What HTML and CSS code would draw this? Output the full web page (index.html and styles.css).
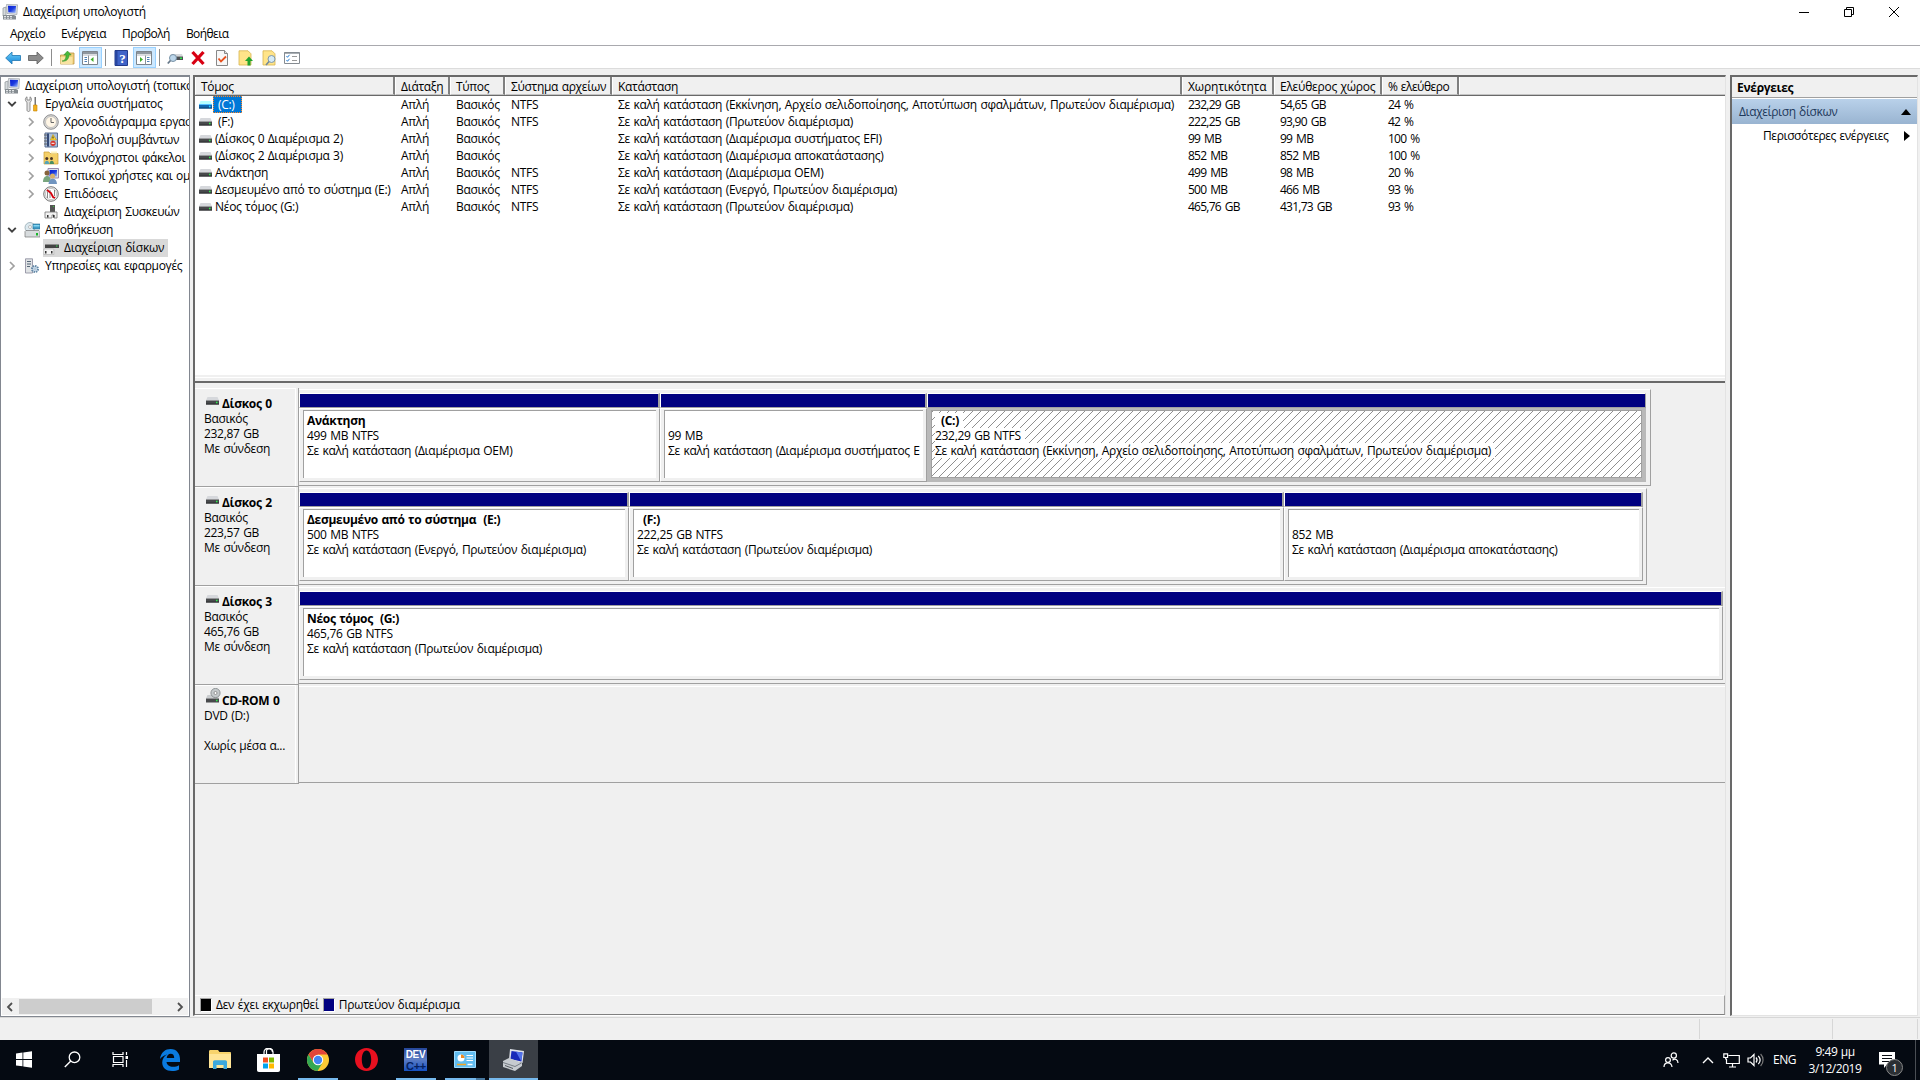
FILE: index.html
```html
<!DOCTYPE html>
<html lang="el">
<head>
<meta charset="utf-8">
<title>Διαχείριση υπολογιστή</title>
<link rel="stylesheet" href="styles.css">
</head>
<body>
<svg class="defs" aria-hidden="true">
  <defs>
    <linearGradient id="gBlue" x1="0" y1="0" x2="1" y2="1"><stop offset="0" stop-color="#0a1fd0"/><stop offset=".5" stop-color="#1c3be0"/><stop offset="1" stop-color="#a8c4f8"/></linearGradient>
    <linearGradient id="gArrow" x1="0" y1="0" x2="0" y2="1"><stop offset="0" stop-color="#6fd0f8"/><stop offset="1" stop-color="#1484d8"/></linearGradient>
    <linearGradient id="gDev" x1="0" y1="0" x2="0" y2="1"><stop offset="0" stop-color="#24469a"/><stop offset=".5" stop-color="#5b7cc4"/><stop offset="1" stop-color="#1550c0"/></linearGradient>
    <symbol id="i-comp" viewBox="0 0 16 16"><path d="M1 4l3-1v9H1z" fill="#d5d9dc" stroke="#8b9297" stroke-width=".7"/><path d="M4.500.5L15.500.8l-.6 9.700L5 9.500z" fill="#dfe3e8" stroke="#9ba1a8" stroke-width=".7"/><path d="M6 1.800l8 .2-.4 7L6.300 8.300z" fill="url(#gBlue)"/><path d="M1 11h11l2 1v3.500H1z" fill="#858c91"/><path d="M2 12.500h2M5 12.500h2M8 12.500h2M2 14.200h2M5 14.200h2M8 14.200h2" stroke="#e4e7e9"/></symbol>
    <symbol id="i-tools" viewBox="0 0 16 16"><path d="M3 .8C.8 2 .8 5 3 6.200V14c0 2 3 2 3 0V6.200C8 5 8 2 6 .8V4H3z" fill="#e4e4e4" stroke="#777" stroke-width=".8"/><path d="M10.500 1h1.500v8h-1.500z" fill="#777"/><path d="M9.500 9h3.500v6h-3.500z" fill="#f2b01e" stroke="#c78500" stroke-width=".6"/></symbol>
    <symbol id="i-clock" viewBox="0 0 16 16"><circle cx="8" cy="8" r="7.300" fill="#d8d8d8" stroke="#777" stroke-width=".8"/><circle cx="8" cy="8" r="5.500" fill="#fff6e6" stroke="#aaa" stroke-width=".6"/><path d="M8 4v4.500h3" fill="none" stroke="#666"/></symbol>
    <symbol id="i-event" viewBox="0 0 16 16"><path d="M2 1h12.500v14H2z" fill="#a9bedb" stroke="#5a6f92"/><path d="M4 1.500h2v13H4z" fill="#354a77"/><path d="M1 3h3M1 6h3M1 9h3M1 12h3" stroke="#666"/><path d="M10 2.500l3.500 5.500h-6z" fill="#ffd83a" stroke="#b58a00" stroke-width=".5"/><path d="M10 4.500v2" stroke="#222"/><circle cx="10" cy="11.300" r="2.600" fill="#d8342a"/><path d="M8.500 11.300h3" stroke="#fff"/></symbol>
    <symbol id="i-share" viewBox="0 0 16 16"><path d="M1 2h5l1 1.500h8V14H1z" fill="#f4cf68" stroke="#c99c35" stroke-width=".7"/><path d="M8 1.500h6v2H8z" fill="#fff2bd"/><circle cx="3.800" cy="8.500" r="1.500" fill="#4a3526"/><path d="M1.500 14c0-4.500 4.700-4.500 4.700 0z" fill="#56a4b8"/><circle cx="8.500" cy="8.500" r="1.500" fill="#4a3526"/><path d="M6.500 14c0-4.500 4.500-4.500 4.500 0z" fill="#498d62"/></symbol>
    <symbol id="i-users" viewBox="0 0 16 16"><path d="M5 .5h10.500V10H5z" fill="#dce2ec" stroke="#98a"/><path d="M6.500 2H14v6.500H6.500z" fill="url(#gBlue)"/><circle cx="4" cy="5" r="2.500" fill="#87633c"/><path d="M0 14c0-8 8-8 8 0z" fill="#78a57e"/><circle cx="9.500" cy="8" r="2.500" fill="#d7b06c"/><path d="M5.500 16c0-7 8.500-7 8.500 0z" fill="#7195c0"/></symbol>
    <symbol id="i-perf" viewBox="0 0 16 16"><circle cx="8" cy="8" r="7.300" fill="#eee" stroke="#777"/><circle cx="8" cy="8" r="5.600" fill="#fff" stroke="#999" stroke-width=".5"/><path d="M4.500 12V5.500M7 12V4M11.500 10V4" stroke="#555" stroke-width=".7"/><path d="M4 4l4 3 2 4 2 1" stroke="#d4000c" stroke-width="1.800" fill="none"/></symbol>
    <symbol id="i-device" viewBox="0 0 16 16"><path d="M7 1h5v7H7z" fill="#555"/><path d="M10 2h1v1h-1z" fill="#3c3"/><path d="M2 8h12v6h-3v-3H9v3H2z" fill="#f2f2f2" stroke="#777" stroke-width=".8"/><path d="M4 11h1.500v2.500H4zM10 11h1.500v2.500H10z" fill="#333"/></symbol>
    <symbol id="i-storage" viewBox="0 0 16 16"><circle cx="6" cy="5.500" r="5" fill="#dce9ef" stroke="#8aa0aa" stroke-width=".7"/><circle cx="6" cy="5" r="1.500" fill="#fff" stroke="#888" stroke-width=".5"/><path d="M9 2h7v5H9z" fill="#3f9cc8" stroke="#266e92" stroke-width=".6"/><path d="M9.500 3h6v1.500h-6z" fill="#85d6f2"/><path d="M1 9.500l1-1h13l1 1V15H1z" fill="#d8dcde" stroke="#777" stroke-width=".7"/><path d="M12 11h2v2.500h-2z" fill="#1ab52a"/></symbol>
    <symbol id="i-diskmgmt" viewBox="0 0 16 16"><path d="M4 2h10l2 2.500H2z" fill="#d6d6d6"/><path d="M2 4.500h14v3.500H2z" fill="#444"/><path d="M13 5.500h1.500v1H13z" fill="#3d5"/><path d="M.8 9h10v5.500H.8z" fill="#f5f5f5" stroke="#aaa" stroke-width=".6"/><path d="M2 11h1.500v2.500H2zM8 11h1.500v2.500H8z" fill="#333"/></symbol>
    <symbol id="i-services" viewBox="0 0 16 16"><path d="M1.500.8h7V15h-7z" fill="#e0e3e5" stroke="#889" stroke-width=".8"/><path d="M3 3.500h4M3 6h4M3 8.500h3" stroke="#567"/><circle cx="11" cy="11" r="3" fill="#d7e7f5" stroke="#6488a6" stroke-width="2" stroke-dasharray="1.500 .8"/><circle cx="11" cy="11" r="1" fill="#fff" stroke="#6488a6" stroke-width=".5"/></symbol>
    <symbol id="i-drive" viewBox="0 0 13 8"><path d="M1.500 0h10L13 3.500H0z" fill="#d6d8dc"/><path d="M0 3.500h13v4H0z" fill="#47494b"/><path d="M0 6.500h13v1H0z" fill="#2c2e30"/><path d="M10 4.800h1.500v1.400H10z" fill="#2df24b"/></symbol>
    <symbol id="i-cd" viewBox="0 0 15 15"><path d="M1.500 7h10L13 10.500H0z" fill="#c9ccce"/><circle cx="9.500" cy="5" r="4.600" fill="#c4c9cb" stroke="#7f8486" stroke-width=".8"/><circle cx="9.500" cy="5" r="1.500" fill="#fff" stroke="#777" stroke-width=".7"/><path d="M0 10.500h13v4H0z" fill="#47494b"/><path d="M10 11.800h1.500v1.400H10z" fill="#2df24b"/></symbol>
    <symbol id="i-down" viewBox="0 0 10 8"><path d="M1.200 1.800L5 5.600l3.800-3.800" fill="none" stroke="#404040" stroke-width="1.900"/></symbol>
    <symbol id="i-right" viewBox="0 0 8 10"><path d="M2 1l4 4-4 4" fill="none" stroke="#a0a0a0" stroke-width="1.700"/></symbol>
    <symbol id="i-left" viewBox="0 0 8 10"><path d="M6 1L2 5l4 4" fill="none" stroke="#505050" stroke-width="1.800"/></symbol>
    <symbol id="i-pane" viewBox="0 0 16 14"><path d="M.5.5h15v13H.5z" fill="#fff" stroke="#7c848c"/><path d="M1 1h14v2H1z" fill="#8f979f"/><path d="M1 4h14" stroke="#b5bac0"/><path d="M6.500 4.500v9" stroke="#8a9299"/><path d="M2.500 6.500h2.500M2.500 8.500h2.500M2.500 10.500h2.500" stroke="#4d7fb5"/><path d="M11.500 6v5L8.500 8.500z" fill="#3fae2a"/></symbol>
    <symbol id="i-pane2" viewBox="0 0 16 14"><path d="M.5.5h15v13H.5z" fill="#fff" stroke="#7c848c"/><path d="M1 1h14v2H1z" fill="#8f979f"/><path d="M1 4h14" stroke="#b5bac0"/><path d="M9.500 4.500v9" stroke="#8a9299"/><path d="M11 6.500h2.500M11 8.500h2.500M11 10.500h2.500" stroke="#4d7fb5"/><path d="M4 6v5l3-2.500z" fill="#3fae2a"/></symbol>
  </defs>
</svg>

<div class="window">
  <header class="titlebar">
    <svg class="i16"><use href="#i-comp"/></svg>
    <h1 class="title">Διαχείριση υπολογιστή</h1>
    <div class="winbtns">
      <svg viewBox="0 0 12 12"><path d="M1 6.500h10" stroke="#000"/></svg>
      <svg viewBox="0 0 12 12"><path d="M1.500 3.500h7v7h-7zM3.500 3.500v-2h7v7h-2" fill="none" stroke="#000"/></svg>
      <svg viewBox="0 0 12 12"><path d="M1 1l10 10M11 1L1 11" stroke="#000"/></svg>
    </div>
  </header>
  <nav class="menubar"><span>Αρχείο</span><span>Ενέργεια</span><span>Προβολή</span><span>Βοήθεια</span></nav>
  <div class="toolbar">
    <span class="tb"><svg class="i16" viewBox="0 0 16 16"><path d="M.7 8L7 2v3.500h8.500v5H7V14z" fill="url(#gArrow)" stroke="#2b7fb8" stroke-width=".9"/></svg></span>
    <span class="tb"><svg class="i16" viewBox="0 0 16 16"><path d="M15.300 8L9 2v3.500H.5v5H9V14z" fill="#8c8c8c" stroke="#666" stroke-width=".9"/></svg></span>
    <i class="sep"></i>
    <span class="tb"><svg class="i16" viewBox="0 0 16 16"><path d="M1.500 5h5l1-2H15v11H1.500z" fill="#efcf7a" stroke="#bd9641" stroke-width=".8"/><path d="M1.500 7h12v7h-12z" fill="#f8e3a2"/><path d="M3 11c3 0 4-3 4-6H4.800L8.500 1l3.700 4H10c0 4-3 7-7 6z" fill="#48b83a" stroke="#2f8b28" stroke-width=".5"/></svg></span>
    <span class="tb on"><svg class="pane"><use href="#i-pane"/></svg></span>
    <i class="sep"></i>
    <span class="tb"><svg class="i16" viewBox="0 0 16 16"><path d="M2 .5h12.500v15H2z" fill="#3f63c8" stroke="#223a8c"/><path d="M2 1h2.500v14H2z" fill="#2846a0"/><text x="9.300" y="12.500" class="q">?</text></svg></span>
    <span class="tb on"><svg class="pane"><use href="#i-pane2"/></svg></span>
    <i class="sep"></i>
    <span class="tb"><svg class="i16" viewBox="0 0 16 16"><path d="M4 4h11l1 2.500H3z" fill="#d4d7da"/><path d="M3 6.500h13v3.500H3z" fill="#4c4f52"/><path d="M13 7.500h2V9h-2z" fill="#2fe44b"/><circle cx="6" cy="8" r="3.500" fill="#bcd6ea" stroke="#7891a5"/><path d="M3.500 10.500L.8 13.500" stroke="#667889" stroke-width="1.800"/></svg></span>
    <span class="tb"><svg class="i16" viewBox="0 0 16 16"><path d="M2.500 2l11 12M13.500 2l-11 12" stroke="#d80012" stroke-width="3.300"/></svg></span>
    <span class="tb"><svg class="i16" viewBox="0 0 16 16"><path d="M2.500.5h8l3 3v12h-11z" fill="#f7f7f7" stroke="#888"/><path d="M10.500.5v3h3" fill="#ddd" stroke="#888"/><path d="M4.500 8.500l2.500 3 5-5" fill="none" stroke="#e8501c" stroke-width="1.800"/></svg></span>
    <span class="tb"><svg class="i16" viewBox="0 0 16 16"><path d="M2 .8h9l3 3V15H2z" fill="#ffe489" stroke="#d7b450" stroke-width=".8"/><path d="M10.500 15.500V11H8l4-4.500 4 4.500h-2.500v4.500z" fill="#22a32c"/></svg></span>
    <span class="tb"><svg class="i16" viewBox="0 0 16 16"><path d="M2 .8h9l3 3V15H2z" fill="#ffe489" stroke="#d7b450" stroke-width=".8"/><circle cx="10.500" cy="9" r="3.500" fill="#d5ebf7" stroke="#7f98aa"/><path d="M8 11.500l-3 3.500" stroke="#71899a" stroke-width="1.600"/></svg></span>
    <span class="tb"><svg class="i16" viewBox="0 0 16 16"><path d="M.5 2.500h15v11H.5z" fill="#fff" stroke="#858b91"/><path d="M.5 3h15" stroke="#858b91" stroke-width="1.400"/><path d="M2.500 6l1 1.300 2-2.500M2.500 10l1 1.300 2-2.500" fill="none" stroke="#2a7fd4"/><path d="M8 6.500h5M8 10.500h5" stroke="#999"/></svg></span>
  </div>

  <main class="work">
    <aside class="tree">
      <ul>
        <li class="root"><svg class="i16"><use href="#i-comp"/></svg><span>Διαχείριση υπολογιστή (τοπικό)</span></li>
        <li class="l1"><svg class="ex"><use href="#i-down"/></svg><svg class="i16"><use href="#i-tools"/></svg><span>Εργαλεία συστήματος</span></li>
        <li class="l2"><svg class="ex"><use href="#i-right"/></svg><svg class="i16"><use href="#i-clock"/></svg><span>Χρονοδιάγραμμα εργασιών</span></li>
        <li class="l2"><svg class="ex"><use href="#i-right"/></svg><svg class="i16"><use href="#i-event"/></svg><span>Προβολή συμβάντων</span></li>
        <li class="l2"><svg class="ex"><use href="#i-right"/></svg><svg class="i16"><use href="#i-share"/></svg><span>Κοινόχρηστοι φάκελοι</span></li>
        <li class="l2"><svg class="ex"><use href="#i-right"/></svg><svg class="i16"><use href="#i-users"/></svg><span>Τοπικοί χρήστες και ομάδες</span></li>
        <li class="l2"><svg class="ex"><use href="#i-right"/></svg><svg class="i16"><use href="#i-perf"/></svg><span>Επιδόσεις</span></li>
        <li class="l2"><i class="ex"></i><svg class="i16"><use href="#i-device"/></svg><span>Διαχείριση Συσκευών</span></li>
        <li class="l1"><svg class="ex"><use href="#i-down"/></svg><svg class="i16"><use href="#i-storage"/></svg><span>Αποθήκευση</span></li>
        <li class="l2"><i class="ex"></i><b class="picked"><svg class="i16"><use href="#i-diskmgmt"/></svg><span>Διαχείριση δίσκων</span></b></li>
        <li class="l1"><svg class="ex"><use href="#i-right"/></svg><svg class="i16"><use href="#i-services"/></svg><span>Υπηρεσίες και εφαρμογές</span></li>
      </ul>
      <div class="hscroll"><svg><use href="#i-left"/></svg><i class="thumb"></i><svg class="flip"><use href="#i-left"/></svg></div>
    </aside>

    <section class="center">
      <div class="volumes">
        <div class="vhead"><span>Τόμος</span><span>Διάταξη</span><span>Τύπος</span><span>Σύστημα αρχείων</span><span>Κατάσταση</span><span>Χωρητικότητα</span><span>Ελεύθερος χώρος</span><span>% ελεύθερο</span><span></span></div>
        <div class="vrow active"><span><svg class="drv"><use href="#i-drive"/></svg><em>(C:)</em></span><span>Απλή</span><span>Βασικός</span><span>NTFS</span><span>Σε καλή κατάσταση (Εκκίνηση, Αρχείο σελιδοποίησης, Αποτύπωση σφαλμάτων, Πρωτεύον διαμέρισμα)</span><span class="num">232,29 GB</span><span class="num">54,65 GB</span><span class="num">24 %</span></div>
        <div class="vrow"><span><svg class="drv"><use href="#i-drive"/></svg><em class="in">(F:)</em></span><span>Απλή</span><span>Βασικός</span><span>NTFS</span><span>Σε καλή κατάσταση (Πρωτεύον διαμέρισμα)</span><span class="num">222,25 GB</span><span class="num">93,90 GB</span><span class="num">42 %</span></div>
        <div class="vrow"><span><svg class="drv"><use href="#i-drive"/></svg><em>(Δίσκος 0 Διαμέρισμα 2)</em></span><span>Απλή</span><span>Βασικός</span><span></span><span>Σε καλή κατάσταση (Διαμέρισμα συστήματος EFI)</span><span class="num">99 MB</span><span class="num">99 MB</span><span class="num">100 %</span></div>
        <div class="vrow"><span><svg class="drv"><use href="#i-drive"/></svg><em>(Δίσκος 2 Διαμέρισμα 3)</em></span><span>Απλή</span><span>Βασικός</span><span></span><span>Σε καλή κατάσταση (Διαμέρισμα αποκατάστασης)</span><span class="num">852 MB</span><span class="num">852 MB</span><span class="num">100 %</span></div>
        <div class="vrow"><span><svg class="drv"><use href="#i-drive"/></svg><em>Ανάκτηση</em></span><span>Απλή</span><span>Βασικός</span><span>NTFS</span><span>Σε καλή κατάσταση (Διαμέρισμα OEM)</span><span class="num">499 MB</span><span class="num">98 MB</span><span class="num">20 %</span></div>
        <div class="vrow"><span><svg class="drv"><use href="#i-drive"/></svg><em>Δεσμευμένο από το σύστημα (E:)</em></span><span>Απλή</span><span>Βασικός</span><span>NTFS</span><span>Σε καλή κατάσταση (Ενεργό, Πρωτεύον διαμέρισμα)</span><span class="num">500 MB</span><span class="num">466 MB</span><span class="num">93 %</span></div>
        <div class="vrow"><span><svg class="drv"><use href="#i-drive"/></svg><em>Νέος τόμος (G:)</em></span><span>Απλή</span><span>Βασικός</span><span>NTFS</span><span>Σε καλή κατάσταση (Πρωτεύον διαμέρισμα)</span><span class="num">465,76 GB</span><span class="num">431,73 GB</span><span class="num">93 %</span></div>
      </div>
      <div class="splitter"></div>
      <div class="disks">
        <div class="disk">
          <div class="dlabel"><strong><svg class="drv"><use href="#i-drive"/></svg>Δίσκος 0</strong><p>Βασικός</p><p>232,87 GB</p><p>Με σύνδεση</p></div>
          <div class="map" style="width:1352px">
            <div class="part" style="width:361px"><div class="bar"></div><div class="body"><div class="box"><p><strong>Ανάκτηση</strong></p><p><span>499 MB NTFS</span></p><p><span>Σε καλή κατάσταση (Διαμέρισμα OEM)</span></p></div></div></div>
            <div class="part" style="width:267px"><div class="bar"></div><div class="body"><div class="box"><p></p><p><span>99 MB</span></p><p><span>Σε καλή κατάσταση (Διαμέρισμα συστήματος E</span></p></div></div></div>
            <div class="part sel" style="width:719px"><div class="bar"></div><div class="body"><div class="box"><p><strong class="ind">(C:)</strong></p><p><span>232,29 GB NTFS</span></p><p><span>Σε καλή κατάσταση (Εκκίνηση, Αρχείο σελιδοποίησης, Αποτύπωση σφαλμάτων, Πρωτεύον διαμέρισμα)</span></p></div></div></div>
          </div>
        </div>
        <div class="disk">
          <div class="dlabel"><strong><svg class="drv"><use href="#i-drive"/></svg>Δίσκος 2</strong><p>Βασικός</p><p>223,57 GB</p><p>Με σύνδεση</p></div>
          <div class="map" style="width:1348px">
            <div class="part" style="width:330px"><div class="bar"></div><div class="body"><div class="box"><p><strong>Δεσμευμένο από το σύστημα&nbsp; (E:)</strong></p><p><span>500 MB NTFS</span></p><p><span>Σε καλή κατάσταση (Ενεργό, Πρωτεύον διαμέρισμα)</span></p></div></div></div>
            <div class="part" style="width:655px"><div class="bar"></div><div class="body"><div class="box"><p><strong class="ind">(F:)</strong></p><p><span>222,25 GB NTFS</span></p><p><span>Σε καλή κατάσταση (Πρωτεύον διαμέρισμα)</span></p></div></div></div>
            <div class="part" style="width:359px"><div class="bar"></div><div class="body"><div class="box"><p></p><p><span>852 MB</span></p><p><span>Σε καλή κατάσταση (Διαμέρισμα αποκατάστασης)</span></p></div></div></div>
          </div>
        </div>
        <div class="disk">
          <div class="dlabel"><strong><svg class="drv"><use href="#i-drive"/></svg>Δίσκος 3</strong><p>Βασικός</p><p>465,76 GB</p><p>Με σύνδεση</p></div>
          <div class="map full">
            <div class="part" style="width:1424px"><div class="bar"></div><div class="body"><div class="box"><p><strong>Νέος τόμος&nbsp; (G:)</strong></p><p><span>465,76 GB NTFS</span></p><p><span>Σε καλή κατάσταση (Πρωτεύον διαμέρισμα)</span></p></div></div></div>
          </div>
        </div>
        <div class="disk">
          <div class="dlabel"><strong><svg class="cd"><use href="#i-cd"/></svg>CD-ROM 0</strong><p>DVD (D:)</p><p></p><p>Χωρίς μέσα α...</p></div>
          <div class="map full"></div>
        </div>
      </div>
      <footer class="legend"><i class="sw black"></i><span>Δεν έχει εκχωρηθεί</span><i class="sw navy"></i><span>Πρωτεύον διαμέρισμα</span></footer>
    </section>

    <aside class="actions">
      <h2>Ενέργειες</h2>
      <div class="group"><span>Διαχείριση δίσκων</span><svg viewBox="0 0 10 6"><path d="M0 6l5-6 5 6z"/></svg></div>
      <div class="more"><span>Περισσότερες ενέργειες</span><svg viewBox="0 0 6 10"><path d="M0 0l6 5-6 5z"/></svg></div>
    </aside>
  </main>
  <div class="status"><i></i><i></i><i></i></div>
</div>

<footer class="taskbar">
  <div class="apps">
    <span><svg width="16" height="17" viewBox="0 0 16 17"><path d="M0 2.500L6.500 1.600V8H0zM7.300 1.500L16 .2V8H7.300zM0 8.900h6.500v6.400L0 14.400zM7.300 8.900H16v7.900l-8.700-1.300z" fill="#fff"/></svg></span>
    <span><svg width="17" height="17" viewBox="0 0 17 17"><circle cx="10.500" cy="6.300" r="5.300" fill="none" stroke="#fff" stroke-width="1.300"/><path d="M6.800 10L.8 16" stroke="#fff" stroke-width="1.400"/></svg></span>
    <span><svg width="17" height="17" viewBox="0 0 17 17"><path d="M1 1v2.500h10V1M1 16v-2.500h10V16M1.500 5.500h9.500v6H1.500zM14.500 1v3M14.500 9v7" fill="none" stroke="#fff" stroke-width="1.200"/><path d="M13.500 5h2.500v3h-2.500z" fill="#fff"/></svg></span>
    <span class="wide"><svg width="20" height="22" viewBox="0 0 20 22"><path d="M0 10C1 3 5.500 0 10.500 0 17 0 20 5 20 10v3H6.500c.3 3 3 4.800 6.500 4.800 2.400 0 4.300-.5 6-1.500v4.200c-2 1-4.300 1.500-7 1.500C6 22 2.200 18.500 2.200 13.500c0-3.700 2-6.500 5-8C5 6 2 7.500 0 10zM6.700 9h7.500c0-2.700-1.200-4.200-3.500-4.200S7 6.500 6.700 9z" fill="#0a7be0"/></svg></span>
    <span><svg width="22" height="19" viewBox="0 0 22 19"><path d="M0 1.500C0 .7.500 0 1.300 0H9l1.500 2H21c.6 0 1 .5 1 1v15H0z" fill="#f7d36c"/><path d="M0 4h22v14H0z" fill="#ffe596"/><path d="M4 19v-7c0-1 .7-1.700 1.700-1.700h10.600c1 0 1.700.7 1.700 1.700v7h-3.500v-4h-7v4z" fill="#3ca8dc"/></svg></span>
    <span><svg width="23" height="24" viewBox="0 0 23 24"><path d="M7 7V4c0-5 9-5 9 0v3M9.500 6.500V3c0-3 6-3 6 1" fill="none" stroke="#fff" stroke-width="1.200"/><path d="M0 6h23v16c0 1-.7 2-2 2H2c-1.300 0-2-1-2-2z" fill="#fff"/><path d="M6 9.500h5v5H6z" fill="#f25022"/><path d="M12 9.500h5v5h-5z" fill="#7fba00"/><path d="M6 15.500h5v5H6z" fill="#00a4ef"/><path d="M12 15.500h5v5h-5z" fill="#ffb900"/></svg></span>
    <span class="run"><svg width="22" height="22" viewBox="0 0 22 22"><circle cx="11" cy="11" r="11" fill="#fcc934"/><path d="M1.500 5.500A11 11 0 0 1 20.500 5.500H11L6.500 13.500z" fill="#e2453a"/><path d="M1.470 5.500A11 11 0 0 0 10.500 22l5-8.200L11 16 6.500 13.700z" fill="#33a853"/><circle cx="11" cy="11" r="5.200" fill="#fff"/><circle cx="11" cy="11" r="4.200" fill="#4285f4"/></svg></span>
    <span><svg width="23" height="23" viewBox="0 0 23 23"><path fill-rule="evenodd" d="M11.500 0C18 0 23 5 23 11.500S18 23 11.500 23 0 18 0 11.500 5 0 11.500 0zm0 2.500c-3 0-4.700 4-4.700 9s1.700 9 4.700 9 4.700-4 4.700-9-1.700-9-4.700-9z" fill="#e8101f"/></svg></span>
    <span class="run"><svg width="23" height="23" viewBox="0 0 23 23"><path d="M0 0h23v23H0z" fill="url(#gDev)"/><text x="11.500" y="10" class="dev">DEV</text><text x="12" y="21.500" class="cpp">C++</text></svg></span>
    <span class="run split"><svg width="22" height="17" viewBox="0 0 22 17"><path d="M.5.5h21v16H.5z" fill="#62bdf0" stroke="#9fdcff"/><circle cx="7" cy="7" r="3.500" fill="#fff"/><path d="M7 7V3.500A3.500 3.500 0 0 1 10.500 7z" fill="#f08a24"/><path d="M12.500 4.500H19M12.500 7H19M12.500 9.500H19" stroke="#fff" stroke-width="1.200"/><path d="M3 13.500h9" stroke="#f5a623" stroke-width="1.500"/><path d="M13.500 13.500h5" stroke="#fff" stroke-width="1.500"/></svg></span>
    <span class="run current"><svg width="23" height="23" viewBox="0 0 23 23"><path d="M8 1l14 2-1.500 12L7 12z" fill="#dfe3ea"/><path d="M9.500 3l11 1.500-1.200 9L8.500 11z" fill="#1729b8"/><path d="M14 3.700l6.500.8-1.200 9z" fill="#5272ea"/><path d="M1 13l6-3 13 5v3l-7 5-12-4z" fill="#c6cbd0"/><path d="M1 14.500l12 4 6.500-3.500" fill="none" stroke="#777e86"/><path d="M3 17.500l8 3" stroke="#555b62"/></svg></span>
  </div>
  <div class="tray">
    <svg class="t-people" viewBox="0 0 16 16" fill="none" stroke="#fff" stroke-width="1.200"><circle cx="10.800" cy="3.500" r="2.600"/><circle cx="5" cy="8" r="2.400"/><path d="M1 15c0-5.500 7.500-5.500 8 0M9.500 8.200c2.500-2.200 5.500-.5 5.500 2.800"/></svg>
    <svg class="t-chev" viewBox="0 0 12 8"><path d="M1 7l5-5 5 5" fill="none" stroke="#fff" stroke-width="1.400"/></svg>
    <svg class="t-net" viewBox="0 0 17 15" fill="none" stroke="#fff" stroke-width="1.200"><path d="M5.500 2.500h10.800v8H3.500V6M9.500 10.500v3M6 14h7M.8.800h3.800v3.700H.8zM2.700 4.500V6h1"/></svg>
    <svg class="t-vol" viewBox="0 0 17 14" fill="none" stroke="#fff" stroke-width="1.200"><path d="M1 5h2.500L7 1.500v11L3.500 9H1zM9 4.500c1.300 1.500 1.300 3.500 0 5M11.300 2.800c2.300 2.600 2.300 5.800 0 8.400"/><path d="M13.600 1c3.300 3.500 3.300 8.500 0 12" stroke="#777"/></svg>
    <span class="lang">ENG</span>
    <div class="clock"><span>9:49 μμ</span><span>3/12/2019</span></div>
    <div class="note"><svg viewBox="0 0 16 16"><path d="M0 0h16v12.500H8L5 16v-3.500H0z" fill="#fff"/><path d="M3 3.500h10M3 6.500h10M3 9.500h7" stroke="#0a0e14" stroke-width="1.100"/></svg><b>1</b></div>
  </div>
</footer>
</body>
</html>
```
FILE: styles.css
```css
* { box-sizing: border-box; }
body {
  margin: 0; width: 1920px; height: 1080px; overflow: hidden;
  display: flex; flex-direction: column;
  background: #f0f0f0; color: #000;
  font: 12px/15px "Open Sans", "Noto Sans", sans-serif;
  letter-spacing: -0.3px; word-spacing: 0.7px;
}
p, h1, h2, ul { margin: 0; padding: 0; font-size: inherit; font-weight: normal; }
.defs { position: absolute; width: 0; height: 0; }
.i16 { width: 16px; height: 16px; flex: none; }
svg { display: block; flex: none; }
.window { height: 1040px; display: flex; flex-direction: column; }

.titlebar { height: 23px; background: #fff; display: flex; align-items: center; padding-left: 2px; }
.title { margin-left: 5px; letter-spacing: -0.4px; }
.winbtns { margin-left: auto; margin-right: 20px; display: flex; gap: 33px; height: 20px; align-items: center; }
.winbtns svg { width: 12px; height: 12px; }
.menubar { height: 23px; background: #fff; border-bottom: 1px solid #a9a9ae; display: flex; gap: 16px; padding: 3px 0 0 10px; letter-spacing: -0.55px; }
.toolbar { height: 23px; background: #fff; border-bottom: 1px solid #dcdcdc; display: flex; align-items: flex-end; padding-left: 1px; flex: none; }
.tb { width: 23.500px; height: 21px; display: flex; align-items: center; justify-content: center; }
.tb.on { background: #cce8ff; border: 1px solid #99d1ff; }
.pane { width: 16px; height: 14px; }
.sep { width: 1px; height: 17px; background: #8d8d8d; margin: 0 3px 2px; }
.q { font: bold 13px "Liberation Serif", serif; fill: #fff; text-anchor: middle; }

.work { flex: 1; display: flex; padding-top: 6px; min-height: 0; border-bottom: 1px solid #d7d7d7; }
.tree { width: 190px; height: 942px; background: #fff; border: 1px solid #828790; border-top-width: 2px; display: flex; flex-direction: column; justify-content: space-between; }
.tree ul { list-style: none; overflow: hidden; }
.tree li { height: 18px; display: flex; align-items: center; white-space: nowrap; }
.tree li span { margin-left: 5px; padding-bottom: 1px; }
.root { padding-left: 3px; }
.l1 { padding-left: 6px; }
.l2 { padding-left: 25px; }
.ex { width: 10px; height: 10px; margin-right: 7px; }
.picked { font-weight: normal; background: #d9d9d9; display: flex; align-items: center; height: 18px; padding: 0 4px 0 0; }
.hscroll { height: 17px; margin: 0 1px 1px 1px; background: #f0f0f0; display: flex; align-items: center; padding: 0 4px; }
.hscroll svg { width: 8px; height: 10px; }
.hscroll .flip { transform: scaleX(-1); margin-left: auto; }
.thumb { width: 133px; height: 15px; background: #cdcdcd; margin-left: 5px; }

.center { margin-left: 3px; width: 1533px; height: 941px; display: flex; flex-direction: column; border: solid; border-width: 2px 1px 1px 2px; border-color: #696969 #e3e3e3 #fff #696969; }
.volumes { height: 298px; background: #fff; flex: none; }
.vhead, .vrow { display: grid; grid-template-columns: 200px 55px 55px 107px 570px 92px 108px 77px 1fr; white-space: nowrap; }
.vhead { height: 19px; background: #f0f0f0; border-bottom: 1px solid #696969; }
.vhead span { border-right: 2px solid #808080; border-left: 1px solid #fff; border-bottom: 1px solid #c4c4c4; padding: 2px 0 0 5px; }
.vhead span:nth-child(8) { letter-spacing: -0.5px; }
.vhead span:nth-child(7) { letter-spacing: -0.25px; }
.vhead span:nth-child(6) { letter-spacing: -0.15px; }
.vhead span:last-child { border-right: 0; }
.vrow { height: 17px; line-height: 17px; }
.vrow > span { padding-left: 6px; }
.vrow .num { letter-spacing: -0.75px; word-spacing: 1.500px; }
.vrow > span:first-child { padding-left: 4px; display: flex; align-items: center; }
.vrow em { font-style: normal; margin-left: 3px; }
.vrow em.in { margin-left: 6px; }
.drv { width: 13px; height: 8px; }
.active em { background: #0078d7; color: #fff; width: 29px; margin-left: 1px; padding-left: 4px; height: 17px; border: 1px dotted #ff8728; line-height: 15px; }
.active .drv { filter: sepia(1) hue-rotate(165deg) saturate(5); }
.splitter { height: 8px; border-top: 2px solid #f0f0f0; border-bottom: 2px solid #696969; box-shadow: inset 0 1px #fff; flex: none; }

.disks { flex: 1; padding-top: 5px; }
.disk { display: flex; height: 99px; }
.dlabel { width: 104px; border-bottom: 1px solid #a0a0a0; border-right: 1px solid #a0a0a0; box-shadow: inset -2px 0 #f0f0f0, inset -3px 0 #fff, inset 0 1px #fff; padding: 8px 0 0 9px; }
.dlabel p, .box p { height: 15px; white-space: nowrap; }
.dlabel strong { display: flex; height: 15px; padding-left: 2px; white-space: nowrap; }
.dlabel .drv { margin: 1px 3px 0 0; }
.cd { width: 15px; height: 15px; margin: -5px 1px 0 0; }
.map { height: 97px; margin-top: 1px; border-top: 1px solid #fff; border-bottom: 1px solid #a0a0a0; border-right: 1px solid #a0a0a0; padding-top: 3px; display: flex; }
.map.full { flex: 1; border-right: 0; }
.part { height: 89px; display: flex; flex-direction: column; }
.bar { height: 15px; background: #000080; border: 1px solid; border-right-width: 2px; border-color: #fff #a0a0a0 #a0a0a0 #fff; }
.body { height: 74px; background: #f0f0f0; border: 1px solid; border-color: #fff #a0a0a0 #a0a0a0 #fff; padding: 1px 3px 0; }
.box { height: 68px; background: #fff; border: solid #a0a0a0; border-width: 1px 0 0 1px; padding: 2px 3px 0; overflow: hidden; }
.box .ind { padding-left: 6px; }
.sel .bar { border-right-width: 1px; }
.sel .body { background: #b9b9b9; border-color: #b9b9b9; }
.sel .box { border-width: 1px; background: repeating-linear-gradient(135deg, #8f8f8f 0 .8px, #fff .8px 5.657px); }
.sel .box strong, .sel .box span { display: inline-block; background: #fff; height: 15px; padding-right: 4px; }
.legend { height: 20px; border: solid; border-width: 1px 1px 1px 0; border-color: #fff #a0a0a0 #808080; display: flex; align-items: center; padding: 0 0 1px 5px; }
.sw { width: 12px; height: 14px; border: 1px solid; border-color: #a0a0a0 #fff #fff #a0a0a0; margin-right: 4px; }
.black { background: #000; }
.navy { background: #000080; margin-left: 4px; }

.actions { margin-left: 4px; width: 188px; height: 941px; background: #fff; border: solid; border-width: 2px 1px 1px 2px; border-color: #696969 #e3e3e3 #e3e3e3 #696969; }
.actions h2 { height: 21px; background: #f0f0f0; border-bottom: 1px solid #a0a0a0; font-weight: bold; padding: 3px 0 0 5px; }
.group { height: 25px; margin-top: 1px; background: linear-gradient(#b9d1ea, #99b4d1); display: flex; align-items: center; justify-content: space-between; padding: 0 6px 0 7px; color: #1e395b; letter-spacing: -0.4px; }
.group svg { width: 10px; height: 6px; fill: #000; }
.more { height: 23px; display: flex; align-items: center; justify-content: space-between; padding: 0 7px 0 31px; letter-spacing: -0.4px; }
.more svg { width: 6px; height: 10px; }
.status { height: 22px; flex: none; display: grid; grid-template-columns: 1700px 133px 85px; }
.status i { border-right: 1px solid #d7d7d7; margin: 1px 0; }

.taskbar { height: 40px; background: #050a12; color: #fff; display: flex; justify-content: space-between; }
.apps { display: flex; }
.apps span { width: 49px; height: 40px; display: flex; align-items: center; justify-content: center; padding-bottom: 1px; }
.apps span:nth-child(-n+3) { width: 48px; }
.apps .wide { width: 52px; }
.apps span:nth-child(5) { width: 48px; }
.apps span:nth-child(5) svg, .apps span:nth-child(6) svg { margin-left: -1px; }
.run { background: linear-gradient(#76b9ed, #76b9ed) center bottom / 40px 2px no-repeat; }
.split { background: linear-gradient(90deg, #76b9ed 31px, #47789f 31px) center bottom / 40px 2px no-repeat; }
.current { background: linear-gradient(#76b9ed, #76b9ed) center bottom / 100% 2px no-repeat #3a3f46; }
.dev { font: bold 10px "Liberation Sans", sans-serif; fill: #fff; text-anchor: middle; }
.cpp { font: bold 11px "Liberation Sans", sans-serif; fill: #06205c; text-anchor: middle; }
.tray { display: flex; align-items: center; width: 257px; border-right: 1px solid #4a4e54; margin-right: 4px; padding: 0 0 1px 4px; }
.t-people { width: 16px; height: 16px; }
.t-chev { width: 12px; height: 8px; margin-left: 23px; }
.t-net { width: 17px; height: 15px; margin: 2px 0 0 9px; }
.t-vol { width: 17px; height: 14px; margin-left: 7px; }
.lang { margin-left: 9px; width: 24px; letter-spacing: -0.5px; }
.clock { display: flex; flex-direction: column; align-items: center; width: 54px; margin-left: 11px; line-height: 17px; letter-spacing: -0.45px; }
.note { position: relative; width: 16px; height: 16px; margin-left: 17px; }
.note b { position: absolute; left: 7px; top: 7px; width: 17px; height: 17px; border-radius: 50%; background: #2b2f34; border: 1px solid #888; font: 11px/15px "Open Sans", sans-serif; text-align: center; }
```
